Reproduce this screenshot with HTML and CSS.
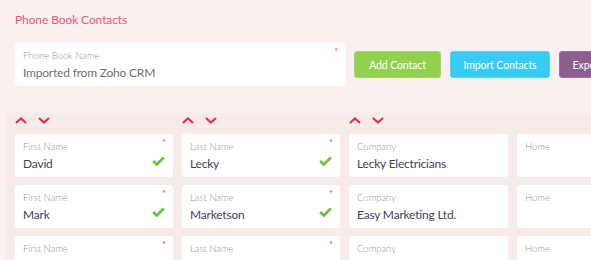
FILE: index.html
```html
<!DOCTYPE html>
<html>
<head>
<meta charset="utf-8">
<link rel="stylesheet" href="styles.css">
</head>
<body>
<div class="page">
  <h1 class="title">Phone Book Contacts</h1>
  <div class="top">
    <div class="field name-field">
      <span class="req">*</span>
      <div class="label">Phone Book Name</div>
      <div class="value gray">Imported from Zoho CRM</div>
    </div>
    <button class="btn green">Add Contact</button>
    <button class="btn cyan">Import Contacts</button>
    <button class="btn purple">Export Contacts</button>
  </div>
  <div class="band">
    <div class="grid">
      <div class="sorter">
        <svg class="chev" viewBox="0 0 12 7"><polyline points="1,6 6,1.5 11,6"/></svg>
        <svg class="chev" viewBox="0 0 12 7"><polyline points="1,1 6,5.5 11,1"/></svg>
      </div>
      <div class="sorter">
        <svg class="chev" viewBox="0 0 12 7"><polyline points="1,6 6,1.5 11,6"/></svg>
        <svg class="chev" viewBox="0 0 12 7"><polyline points="1,1 6,5.5 11,1"/></svg>
      </div>
      <div class="sorter">
        <svg class="chev" viewBox="0 0 12 7"><polyline points="1,6 6,1.5 11,6"/></svg>
        <svg class="chev" viewBox="0 0 12 7"><polyline points="1,1 6,5.5 11,1"/></svg>
      </div>
      <div class="sorter"></div>

      <div class="field card"><span class="req">*</span><div class="label">First Name</div><div class="value">David</div><svg class="check" viewBox="0 0 13 10"><polyline points="1.2,5 4.8,8.4 11.8,1.4"/></svg></div>
      <div class="field card"><span class="req">*</span><div class="label">Last Name</div><div class="value">Lecky</div><svg class="check" viewBox="0 0 13 10"><polyline points="1.2,5 4.8,8.4 11.8,1.4"/></svg></div>
      <div class="field card"><div class="label">Company</div><div class="value">Lecky Electricians</div></div>
      <div class="field card"><div class="label">Home</div><div class="value"></div></div>

      <div class="field card"><span class="req">*</span><div class="label">First Name</div><div class="value">Mark</div><svg class="check" viewBox="0 0 13 10"><polyline points="1.2,5 4.8,8.4 11.8,1.4"/></svg></div>
      <div class="field card"><span class="req">*</span><div class="label">Last Name</div><div class="value">Marketson</div><svg class="check" viewBox="0 0 13 10"><polyline points="1.2,5 4.8,8.4 11.8,1.4"/></svg></div>
      <div class="field card"><div class="label">Company</div><div class="value">Easy Marketing Ltd.</div></div>
      <div class="field card"><div class="label">Home</div><div class="value"></div></div>

      <div class="field card"><span class="req">*</span><div class="label">First Name</div><div class="value"></div></div>
      <div class="field card"><span class="req">*</span><div class="label">Last Name</div><div class="value"></div></div>
      <div class="field card"><div class="label">Company</div><div class="value"></div></div>
      <div class="field card"><div class="label">Home</div><div class="value"></div></div>
    </div>
  </div>
</div>
</body>
</html>
```

FILE: styles.css
```css
html, body {
  margin: 0;
  padding: 0;
  background: #faf0ef;
  overflow: hidden;
}
body {
  width: 591px;
  height: 260px;
  font-family: Lato, "Open Sans", sans-serif;
  font-weight: 400;
}
.page {
  padding-top: 12px;
}
.title {
  margin: 0 0 0 15px;
  font-size: 12px;
  font-weight: 400;
  letter-spacing: -0.1px;
  color: #f2557a;
  line-height: 15px;
}
.top {
  display: flex;
  align-items: center;
  margin: 16px 0 0 15px;
  gap: 9px;
  white-space: nowrap;
}
.field {
  position: relative;
  background: #fff;
  border-radius: 3px;
  box-sizing: border-box;
  height: 43px;
  padding: 7px 8px 0 8px;
}
.name-field {
  width: 330px;
  flex: none;
}
.label {
  font-size: 9.5px;
  font-weight: 300;
  color: #9f9292;
  line-height: 12px;
}
.value {
  margin-top: 3px;
  font-size: 12px;
  letter-spacing: -0.2px;
  line-height: 16px;
  color: #45415a;
  height: 16px;
}
.value.gray {
  color: #737070;
}
.req {
  position: absolute;
  right: 7px;
  top: 4px;
  font-size: 9px;
  line-height: 10px;
  color: #f0355c;
}
.btn {
  flex: none;
  height: 27px;
  border-radius: 3px;
  font-family: Lato, "Open Sans", sans-serif;
  font-weight: 400;
  font-size: 10.5px;
  letter-spacing: -0.1px;
  color: #fff;
  padding: 0 12px;
  margin: 0;
  cursor: pointer;
  text-align: center;
}
.green {
  background: #92d050;
  border: 1px solid #a2d86a;
  width: 87px;
}
.cyan {
  background: #37cdf2;
  border: 1px solid #55d6f5;
  width: 100px;
}
.purple {
  background: #8e5e91;
  border: 1px solid #9d72a0;
  width: 100px;
}
.band {
  margin: 27px 0 0 7px;
  padding-left: 8px;
  background: #f7ebea;
  height: 200px;
}
.grid {
  display: grid;
  grid-template-columns: 158px 158px 159px 158px;
  column-gap: 9px;
  row-gap: 8px;
}
.sorter {
  height: 21px;
  margin-bottom: -8px;
  display: flex;
  gap: 11px;
  padding-top: 4px;
  box-sizing: border-box;
}
.chev {
  width: 12px;
  height: 7px;
  fill: none;
  stroke: #ea2a52;
  stroke-width: 2.1;
}
.card .check {
  position: absolute;
  right: 8px;
  top: 22px;
  width: 13px;
  height: 10px;
  fill: none;
  stroke: #6cc23a;
  stroke-width: 2.8;
}
```
